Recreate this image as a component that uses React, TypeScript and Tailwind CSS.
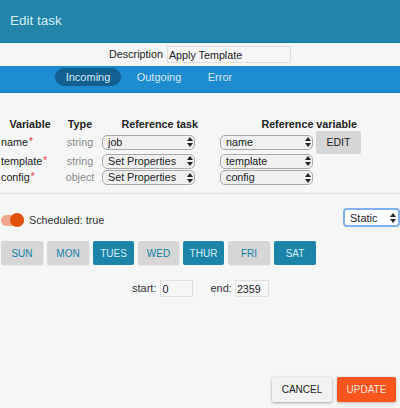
const days = [
  { label: "SUN", on: false, w: "w-[42px]" },
  { label: "MON", on: false, w: "w-[42px]" },
  { label: "TUES", on: true, w: "w-[41px]" },
  { label: "WED", on: false, w: "w-[41px]" },
  { label: "THUR", on: true, w: "w-[41px]" },
  { label: "FRI", on: false, w: "w-[42px]" },
  { label: "SAT", on: true, w: "w-[42px]" },
];

const rows = [
  { name: "name", type: "string", task: "job", variable: "name", h: "h-[20px]" },
  { name: "template", type: "string", task: "Set Properties", variable: "template", h: "h-[18px]" },
  { name: "config", type: "object", task: "Set Properties", variable: "config", h: "h-[15px]" },
];

function SelectBox({ value, width }: { value: string; width: string }) {
  return (
    <div className={`relative ${width}`}>
      <select
        defaultValue={value}
        className="block w-full h-[15px] appearance-none rounded-[5px] border border-[#a9a9a9] bg-[#f0f0f0] pl-[5px] text-[10.75px] leading-[13px] text-[#222] outline-none"
      >
        <option>{value}</option>
      </select>
      <Arrows />
    </div>
  );
}

function Arrows() {
  return (
    <svg width="6" height="10" viewBox="0 0 6 10" className="absolute right-[2px] top-1/2 -translate-y-1/2 text-[#222]" fill="currentColor">
      <path d="M3 0 L6 4 H0 Z" />
      <path d="M3 10 L6 6 H0 Z" />
    </svg>
  );
}

export default function App() {
  return (
    <div className="w-[400px] h-[408px] flex flex-col overflow-hidden bg-[#f5f6f6] font-['Liberation_Sans',Arial,sans-serif] text-[#222]">
      {/* Header */}
      <header className="h-[43px] shrink-0 flex items-center pl-[10px] bg-[#2284a9] border-b border-[#147a9e] text-[13.5px] text-[#d8edf4]">
        Edit task
      </header>

      {/* Description */}
      <div className="h-[23px] shrink-0 flex items-center justify-center gap-[4px] text-[10.75px]">
        <span>Description</span>
        <input
          readOnly
          value="Apply Template"
          className="w-[124px] h-[17px] border border-[#dfdfdf] bg-[#f6f6f6] pl-[1px] text-[10.75px] text-[#222] outline-none"
        />
      </div>

      {/* Tabs */}
      <nav className="h-[27px] shrink-0 flex items-start pt-[2px] pl-[55px] bg-[#1c8bcf] border-b border-[#1a7fba] text-[11px] text-[#d5e9f6]">
        <span className="w-[66px] h-[18px] flex items-center justify-center rounded-full bg-[#12608f]">Incoming</span>
        <span className="w-[66px] h-[18px] flex items-center justify-center ml-[5px]">Outgoing</span>
        <span className="w-[56px] h-[18px] flex items-center justify-center">Error</span>
      </nav>

      {/* Variables */}
      <section className="mt-[24px] pl-[1px] pb-[8px] border-b border-[#e2e3e3] text-[10.75px]">
        <div className="flex h-[14px] items-center font-bold leading-none">
          <span className="w-[63px] text-center pr-[5px]">Variable</span>
          <span className="w-[32px] text-center">Type</span>
          <span className="w-[96px] ml-[6px] text-right whitespace-nowrap">Reference task</span>
          <span className="w-[139px] ml-[22px] text-right pr-[2px] whitespace-nowrap">Reference variable</span>
        </div>
        <div className="relative mt-[1px]">
          {rows.map((r) => (
            <div key={r.name} className={`flex items-center ${r.h}`}>
              <span className="w-[63px]">
                {r.name}
                <span className="text-[#e33] relative -top-[1px] ml-[1px] text-[10px]">*</span>
              </span>
              <span className="w-[32px] text-center text-[#8a8a8a]">{r.type}</span>
              <div className="ml-[6px]">
                <SelectBox value={r.task} width="w-[93px]" />
              </div>
              <div className="ml-[25px]">
                <SelectBox value={r.variable} width="w-[93px]" />
              </div>
              {r.name === "name" && (
                <button className="absolute left-[315px] -top-[1px] w-[45px] h-[23px] rounded-[2px] bg-[#d6d6d6] text-[10.5px] text-[#222]">EDIT</button>
              )}
            </div>
          ))}
        </div>
      </section>

      {/* Schedule */}
      <div className="mt-[15px] h-[22px] flex items-center pl-[1px] relative">
        <span className="relative w-[23px] h-[11px] rounded-full bg-[#f0a68c]">
          <span className="absolute right-0 -top-[2px] w-[14px] h-[14px] rounded-full bg-[#e2500f]" />
        </span>
        <span className="ml-[5px] text-[10.75px] text-[#333]">Scheduled: true</span>
        <div className="absolute right-0 -top-[1px] w-[57px] h-[19px] rounded-[4px] border-2 border-[#7fb0f0]">
          <select
            defaultValue="Static"
            className="block w-full h-full appearance-none rounded-[3px] bg-white pl-[5px] text-[11px] text-[#222] outline-none"
          >
            <option>Static</option>
          </select>
          <Arrows />
        </div>
      </div>

      {/* Days */}
      <div className="mt-[10px] flex gap-[4px] pl-[1px]">
        {days.map((d) => (
          <button
            key={d.label}
            className={`${d.w} h-[24px] rounded-[2px] text-[10px] ${d.on ? "bg-[#1c84a9] text-[#d5edf5]" : "bg-[#d6d6d6] text-[#1280a8] shadow-[1px_1px_0_rgba(0,0,0,0.05)]"}`}
          >
            {d.label}
          </button>
        ))}
      </div>

      {/* Times */}
      <div className="mt-[15px] flex items-center pl-[132px] text-[11px] text-[#333]">
        <span>start:</span>
        <input readOnly value="0" className="ml-[4px] w-[33px] h-[17px] border border-[#dfdfdf] bg-[#f6f6f6] pl-[1px] pt-[1px] text-[10.75px] text-[#222] outline-none" />
        <span className="ml-[17px]">end:</span>
        <input readOnly value="2359" className="ml-[3px] w-[34px] h-[17px] border border-[#dfdfdf] bg-[#f6f6f6] pl-[1px] pt-[1px] text-[10.75px] text-[#222] outline-none" />
      </div>

      {/* Actions */}
      <div className="mt-auto mb-[6px] flex justify-end gap-[5px] pr-[4px]">
        <button className="w-[60px] h-[25px] rounded-[2px] bg-[#f2f2f2] shadow-[0_1px_3px_rgba(0,0,0,0.35)] text-[10px] text-[#222]">CANCEL</button>
        <button className="w-[59px] h-[25px] rounded-[2px] bg-[#f9551f] shadow-[0_1px_3px_rgba(0,0,0,0.25)] text-[10px] text-[#fde4da]">UPDATE</button>
      </div>
    </div>
  );
}
